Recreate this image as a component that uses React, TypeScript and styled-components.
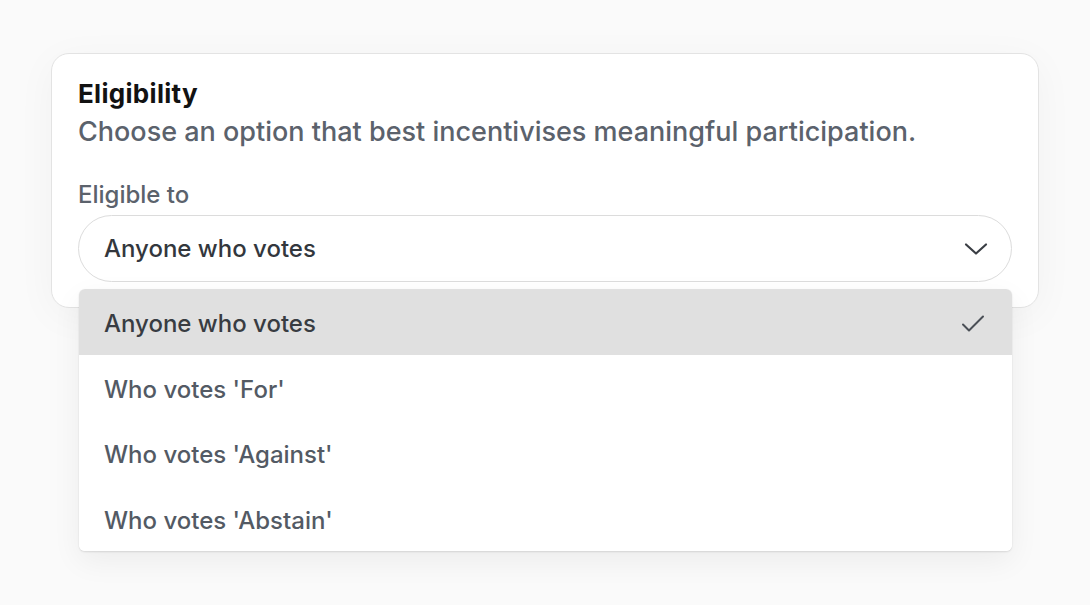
import React from 'react'
import styled, { createGlobalStyle } from 'styled-components'

const GlobalStyle = createGlobalStyle`
  html, body {
    margin: 0;
    padding: 0;
    background: #fafafa;
    font-family: Inter, 'Noto Sans', sans-serif;
    -webkit-font-smoothing: antialiased;
  }
`

const Page = styled.div`
  width: 1090px;
  height: 605px;
  padding: 53px 0 0 51px;
  box-sizing: border-box;
`

const Card = styled.div`
  position: relative;
  width: 988px;
  box-sizing: border-box;
  padding: 23px 26px 25px 26px;
  background: #fff;
  border: 1px solid #e3e3e3;
  border-radius: 18px;
  box-shadow: 0 8px 40px rgba(0, 0, 0, 0.04);
`

const Title = styled.div`
  font-size: 26px;
  font-weight: 700;
  line-height: 34px;
  color: #121212;
  letter-spacing: 0.3px;
`

const Description = styled.div`
  margin-top: 4px;
  font-size: 27px;
  line-height: 34px;
  color: #5b626c;
  font-weight: 500;
`

const Label = styled.div`
  margin-top: 31px;
  font-size: 24px;
  line-height: 30px;
  color: #5b626c;
  font-weight: 500;
`

const Select = styled.div`
  margin-top: 5px;
  height: 67px;
  box-sizing: border-box;
  border: 1px solid #dcdcdc;
  border-radius: 34px;
  display: flex;
  align-items: center;
  justify-content: space-between;
  padding: 0 23px 0 25px;
  font-size: 24px;
  font-weight: 500;
  color: #33373d;
`

const Menu = styled.div`
  position: absolute;
  left: 27px;
  top: 235px;
  width: 933px;
  background: #fff;
  border-radius: 6px;
  overflow: hidden;
  box-shadow: 0 1px 2px rgba(0, 0, 0, 0.12), 0 10px 30px rgba(0, 0, 0, 0.06);
  z-index: 2;
`

const Item = styled.div<{ $selected?: boolean }>`
  height: 65.5px;
  box-sizing: border-box;
  display: flex;
  align-items: center;
  justify-content: space-between;
  padding: 4px 27px 0 25px;
  font-size: 24px;
  font-weight: 500;
  color: ${p => (p.$selected ? '#383c42' : '#535a64')};
  background: ${p => (p.$selected ? '#e0e0e0' : '#fff')};
`

const Chevron = () => (
  <svg width="24" height="24" viewBox="0 0 24 24" fill="none" stroke="#3a3e44" strokeWidth="2.2" strokeLinecap="round" strokeLinejoin="round">
    <path d="M2 7.5l10 9 10-9" />
  </svg>
)

const Check = () => (
  <svg width="24" height="24" viewBox="0 0 24 24" fill="none" stroke="#4a4f56" strokeWidth="2" strokeLinecap="round" strokeLinejoin="round">
    <path d="M2 12.5l6 6 14-14" />
  </svg>
)

const OPTIONS = ['Anyone who votes', "Who votes 'For'", "Who votes 'Against'", "Who votes 'Abstain'"]

const App: React.FC = () => {
  const selected = OPTIONS[0]
  return (
    <Page>
      <GlobalStyle />
      <Card>
        <Title>Eligibility</Title>
        <Description>Choose an option that best incentivises meaningful participation.</Description>
        <Label>Eligible to</Label>
        <Select>
          <span>{selected}</span>
          <Chevron />
        </Select>
        <Menu>
          {OPTIONS.map(option => (
            <Item key={option} $selected={option === selected}>
              <span>{option}</span>
              {option === selected && <Check />}
            </Item>
          ))}
        </Menu>
      </Card>
    </Page>
  )
}

export default App
